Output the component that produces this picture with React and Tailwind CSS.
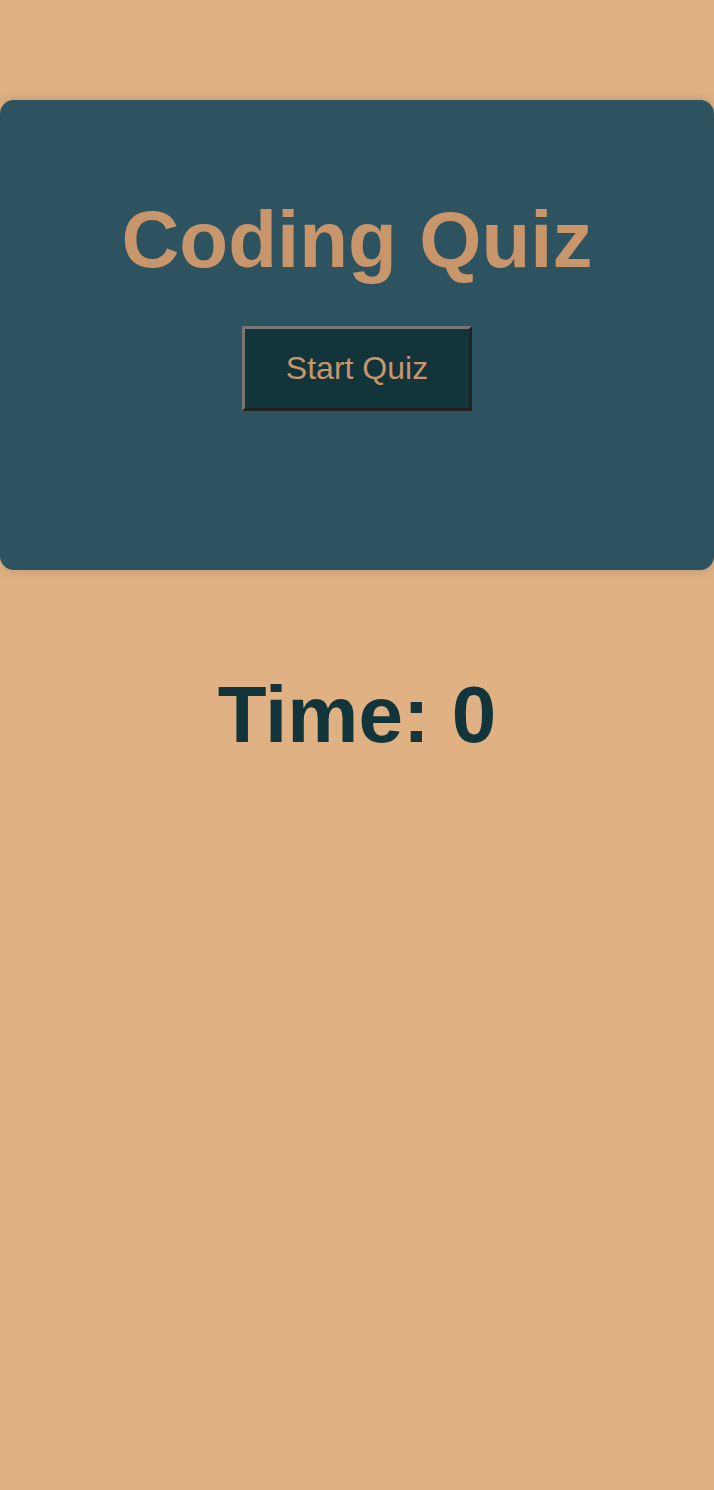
import React from "react";

const App = () => {
  return (
    <div className="min-h-[1490px] w-full bg-[#e0b283] pt-[100px] font-['Liberation_Sans',Arial,sans-serif]">
      {/* Quiz card */}
      <section className="h-[470px] rounded-[14px] bg-[#2e5360] pt-[94px] shadow-[0_0_12px_rgba(0,0,0,0.18)] flex flex-col items-center">
        <h1 className="text-[80px] leading-[92px] font-bold text-[#c9956a]">Coding Quiz</h1>
        <button className="mt-[40px] w-[230px] h-[85px] border-[3px] border-solid border-t-[#767676] border-l-[#767676] border-b-[#222222] border-r-[#222222] bg-[#12343b] text-[32px] leading-[37px] text-[#c9956a]">
          Start Quiz
        </button>
      </section>

      {/* Timer */}
      <h2 className="mt-[99px] text-center text-[80px] leading-[92px] font-bold text-[#12343b]">Time: 0</h2>
    </div>
  );
};

export default App;
